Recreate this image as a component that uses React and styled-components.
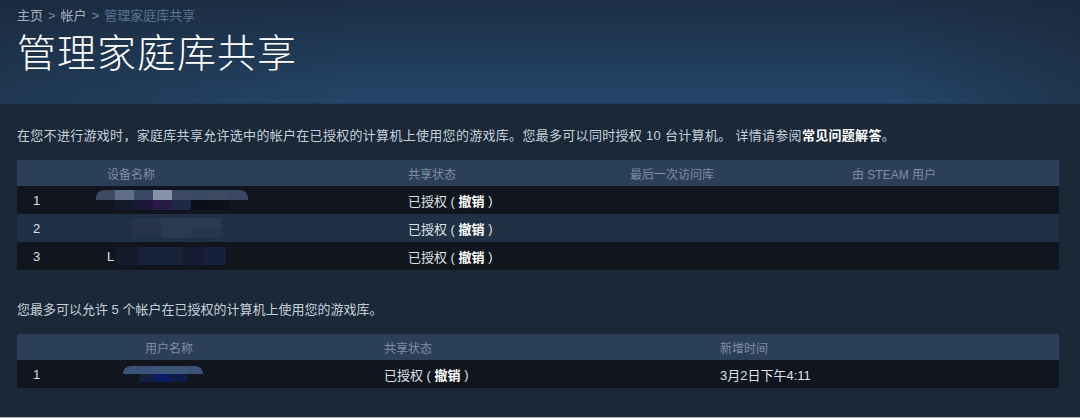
import styled, { createGlobalStyle } from "styled-components";

const GlobalStyle = createGlobalStyle`
  html, body {
    margin: 0;
    padding: 0;
    background: #1b2838;
  }
  body {
    font-family: "Liberation Sans", "Noto Sans CJK SC", Arial, sans-serif;
  }
`;

const Page = styled.div`
  width: 1080px;
  height: 418px;
  box-sizing: border-box;
  background: #1b2838;
  border-bottom: 1px solid #aeb6bf;
  overflow: hidden;
`;

const Header = styled.div`
  height: 105px;
  box-sizing: border-box;
  padding: 8px 17px 0;
  background: linear-gradient(
      to right,
      rgba(27, 40, 56, 0.45) 0%,
      rgba(27, 40, 56, 0) 35%,
      rgba(27, 40, 56, 0) 82%,
      rgba(27, 40, 56, 0.55) 100%
    ),
    linear-gradient(to bottom, #1c2e45 0%, #224162 75%, #24466a 98%, #1a2535 100%);
`;

const Breadcrumb = styled.div`
  font-size: 13px;
  line-height: 16px;
  color: #a7b0ba;
`;

const Sep = styled.span`
  color: #7d8c9e;
  margin: 0 5px;
`;

const Current = styled.span`
  color: #5a7592;
`;

const Title = styled.h1`
  margin: 2px 0 0;
  font-family: "Noto Sans CJK SC", sans-serif;
  font-size: 39px;
  font-weight: 300;
  line-height: 48px;
  color: #ffffff;
  letter-spacing: 1px;
`;

const Content = styled.div`
  padding: 0 21px 0 17px;
`;

const Note = styled.p`
  margin: ${(p) => p.$top}px 0 15px;
  font-size: 13px;
  line-height: 18px;
  color: #c6d0da;
  letter-spacing: ${(p) => p.$spacing || 0}px;
`;

const Strong = styled.b`
  color: #ffffff;
  font-weight: bold;
`;

const Row = styled.div`
  display: grid;
  grid-template-columns: ${(p) => p.$cols};
  align-items: center;
  padding-left: 16px;
  height: ${(p) => (p.$head ? 26 : 28)}px;
  font-size: ${(p) => (p.$head ? 12 : 13)}px;
  background: ${(p) => (p.$head ? "#2c3f59" : p.$alt ? "#213145" : "#11161e")};
  color: ${(p) => (p.$head ? "#7f8ea3" : "#dbe1e7")};
`;

const Cell = styled.div`
  white-space: nowrap;
  display: flex;
  align-items: center;
`;

const Revoke = styled.b`
  font-weight: bold;
  color: #ffffff;
`;

const Censor = styled.div`
  display: grid;
  grid-template-columns: repeat(${(p) => p.$n}, ${(p) => p.$w}px);
  grid-auto-rows: ${(p) => p.$h}px;
  margin-left: ${(p) => p.$shift}px;
  border-radius: ${(p) => p.$round}px ${(p) => p.$round}px 0 0;
  overflow: hidden;
`;

const Px = styled.span`
  background: ${(p) => p.$c};
`;

const Pixels = ({ cols, w, h, shift = 0, round = 0, colors }) => (
  <Censor $n={cols} $w={w} $h={h} $shift={shift} $round={round}>
    {colors.map((c, i) => (
      <Px key={i} $c={c} />
    ))}
  </Censor>
);

const Status = () => (
  <>
    已授权 (&nbsp;<Revoke>撤销</Revoke>&nbsp;)
  </>
);

const DEVICE_COLS = "74px 301px 222px 222px 1fr";
const USER_COLS = "112px 239px 336px 1fr";

const blur1 = [
  "#3c4a62", "#5f6d88", "#3a4a66", "#8792a8", "#3c4a66", "#3a4a66", "#3c4a62", "#3a4662",
  "#11161e", "#131a2c", "#1e1838", "#2a1a48", "#1c2846", "#0a0e16", "#0c1018", "#11161e",
];
const blur2 = [
  "#11161e00", "#26354a", "#2b3b52", "#2a3a50",
  "#213145", "#243348", "#2a3a50", "#26364c",
];
const blur3 = ["#141c2c", "#17213a", "#182238", "#151d30", "#17203a"];
const blur4 = [
  "#3a5376", "#3a5376", "#3c5678", "#3c5678", "#3a5376",
  "#11161e", "#132040", "#0a1c66", "#0f1c48", "#11161e",
];

export default function App() {
  return (
    <Page>
      <GlobalStyle />
      <Header>
        <Breadcrumb>
          主页<Sep>&gt;</Sep>帐户<Sep>&gt;</Sep>
          <Current>管理家庭库共享</Current>
        </Breadcrumb>
        <Title>管理家庭库共享</Title>
      </Header>
      <Content>
        <Note $top={22} $spacing={0.3}>
          在您不进行游戏时，家庭库共享允许选中的帐户在已授权的计算机上使用您的游戏库。您最多可以同时授权 10 台计算机。 详情请参阅
          <Strong>常见问题解答</Strong>。
        </Note>
        <Row $head $cols={DEVICE_COLS}>
          <Cell />
          <Cell>设备名称</Cell>
          <Cell>共享状态</Cell>
          <Cell>最后一次访问库</Cell>
          <Cell>由 STEAM 用户</Cell>
        </Row>
        <Row $cols={DEVICE_COLS}>
          <Cell>1</Cell>
          <Cell>
            <Pixels cols={8} w={19} h={10} shift={-11} round={8} colors={blur1} />
          </Cell>
          <Cell>
            <Status />
          </Cell>
          <Cell />
          <Cell />
        </Row>
        <Row $alt $cols={DEVICE_COLS}>
          <Cell>2</Cell>
          <Cell>
            <Pixels cols={4} w={30} h={10} shift={-6} colors={blur2} />
          </Cell>
          <Cell>
            <Status />
          </Cell>
          <Cell />
          <Cell />
        </Row>
        <Row $cols={DEVICE_COLS}>
          <Cell>3</Cell>
          <Cell>
            L
            <Pixels cols={5} w={22} h={18} shift={2} colors={blur3} />
          </Cell>
          <Cell>
            <Status />
          </Cell>
          <Cell />
          <Cell />
        </Row>

        <Note $top={31}>您最多可以允许 5 个帐户在已授权的计算机上使用您的游戏库。</Note>
        <Row $head $cols={USER_COLS}>
          <Cell />
          <Cell>用户名称</Cell>
          <Cell>共享状态</Cell>
          <Cell>新增时间</Cell>
        </Row>
        <Row $cols={USER_COLS}>
          <Cell>1</Cell>
          <Cell>
            <Pixels cols={5} w={16} h={8} shift={-22} round={8} colors={blur4} />
          </Cell>
          <Cell>
            <Status />
          </Cell>
          <Cell>3月2日下午4:11</Cell>
        </Row>
      </Content>
    </Page>
  );
}
